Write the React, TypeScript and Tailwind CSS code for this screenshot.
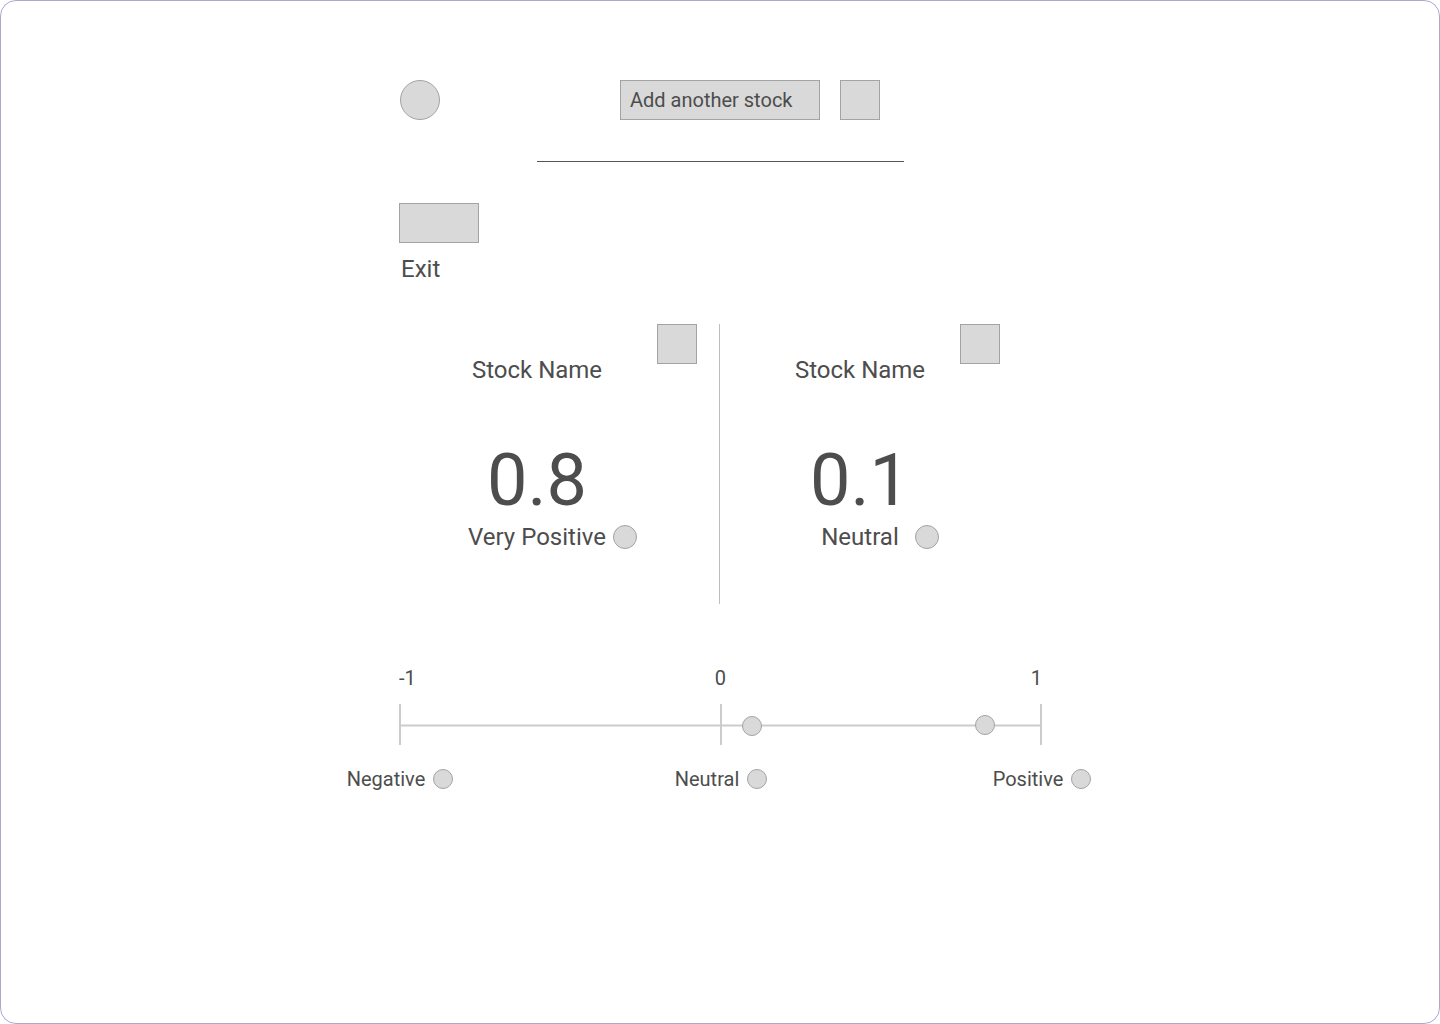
import React from 'react';

const dot = 'rounded-full bg-[#d9d9d9] border border-[#a3a3a3]';
const box = 'bg-[#d9d9d9] border border-[#a3a3a3]';

function StockPanel({ value, label, width, badgeGap }: { value: string; label: string; width: string; badgeGap: string }) {
  return (
    <div className={`relative flex flex-col items-center pt-8 ${width}`}>
      <div className={`absolute top-0 right-0 w-10 h-10 ${box}`} />
      <p className="text-[24px] leading-[28px]">Stock Name</p>
      <p className="mt-[61px] text-[72px] leading-[72px]">{value}</p>
      <div className="relative mt-[6px] text-[24px] leading-[28px]">
        {label}
        <span className={`absolute left-full top-[2px] w-6 h-6 ${badgeGap} ${dot}`} />
      </div>
    </div>
  );
}

function Legend({ label }: { label: string }) {
  return (
    <div className="w-0 flex justify-center">
      <div className="flex items-center gap-2 whitespace-nowrap text-[20px] leading-6">
        {label}
        <span className={`w-5 h-5 ${dot}`} />
      </div>
    </div>
  );
}

export default function App() {
  return (
    <div className="w-[1440px] h-[1024px] bg-white border border-[#aca8cc] rounded-[16px] overflow-hidden font-['Roboto',sans-serif] text-[#4d4d4d]">
      <div className="flex flex-col items-start pt-[79px]">
        {/* toolbar */}
        <div className="ml-[399px] flex items-center">
          <button className={`w-10 h-10 ${dot}`} />
          <button className={`ml-[180px] w-[200px] h-10 pl-[9px] text-left text-[20px] leading-6 ${box}`}>
            Add another stock
          </button>
          <button className={`ml-5 w-10 h-10 ${box}`} />
        </div>

        <div className="ml-[536px] mt-[41px] w-[367px] h-px bg-[#555555]" />

        <div className={`ml-[398px] mt-[41px] w-20 h-10 ${box}`} />
        <p className="ml-[400px] mt-3 text-[24px] leading-[28px]">Exit</p>

        {/* comparison */}
        <div className="ml-[376px] mt-[41px] flex h-[280px]">
          <StockPanel value="0.8" label="Very Positive" width="w-[320px]" badgeGap="ml-[7px]" />
          <div className="ml-[22px] w-px bg-[#bdbdbd]" />
          <StockPanel value="0.1" label="Neutral" width="w-[280px]" badgeGap="ml-4" />
        </div>

        {/* scale */}
        <div className="ml-[398px] mt-[62px] grid grid-cols-3 w-[643px] text-[20px] leading-6">
          <span className="text-left">-1</span>
          <span className="text-center">0</span>
          <span className="text-right">1</span>
        </div>

        <svg className="ml-[389px] mt-[13px]" width="662" height="44" viewBox="0 0 662 44">
          <g stroke="#cccccc" strokeWidth="2">
            <line x1="10" y1="22.5" x2="651" y2="22.5" />
            <line x1="10" y1="1" x2="10" y2="42" />
            <line x1="331" y1="1" x2="331" y2="42" />
            <line x1="651" y1="1" x2="651" y2="42" />
          </g>
          <circle cx="362" cy="23" r="9.5" fill="#d9d9d9" stroke="#a3a3a3" />
          <circle cx="595" cy="22" r="9.5" fill="#d9d9d9" stroke="#a3a3a3" />
        </svg>

        <div className="ml-[399px] mt-5 flex justify-between w-[642px]">
          <Legend label="Negative" />
          <Legend label="Neutral" />
          <Legend label="Positive" />
        </div>
      </div>
    </div>
  );
}
